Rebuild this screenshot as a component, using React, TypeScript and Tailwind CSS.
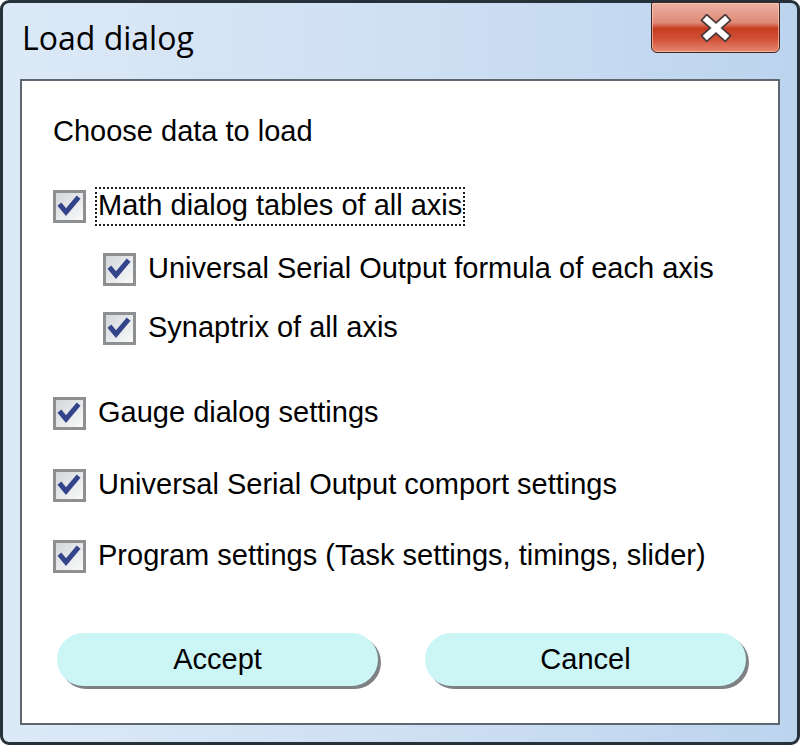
import React from "react";

function Check() {
  return (
    <div className="w-[33px] h-[33px] shrink-0 border-[3px] border-[#8d8f91] bg-gradient-to-br from-[#d3d6da] via-[#e6e8ea] to-[#fafafa] flex items-center justify-center">
      <svg width="27" height="27" viewBox="0 0 27 27">
        <path d="M5 13 L10 19 L21 6" fill="none" stroke="#34448a" strokeWidth="5" strokeLinejoin="miter" strokeLinecap="square" />
      </svg>
    </div>
  );
}

function Row({ label, indent, focus, mt }: { label: string; indent?: boolean; focus?: boolean; mt: string }) {
  return (
    <div className={`flex items-center h-[34px] ${mt} ${indent ? "ml-[50px]" : ""}`}>
      <Check />
      <span
        className={`ml-[9px] px-[1px] h-[39px] flex items-center border-2 border-dotted whitespace-nowrap ${focus ? "border-[#1a1a1a]" : "border-transparent"}`}
      >
        {label}
      </span>
    </div>
  );
}

export default function App() {
  return (
    <div className="w-[800px] h-[745px] overflow-hidden bg-white">
      <div className="w-[800px] h-[745px] border-[3px] border-[#27313a] rounded-[9px] bg-gradient-to-r from-[#dce9f7] via-[#cfe0f3] to-[#bcd4ee] flex flex-col">
        <div className="h-[76px] shrink-0 flex items-start justify-between">
          <div
            className="pl-[19px] pt-[19px] text-[32px] leading-[32px] text-black"
            style={{ fontFamily: '"Open Sans", "Noto Sans", sans-serif' }}
          >
            Load dialog
          </div>
          <div className="mt-[-1px] mr-[17px] w-[129px] h-[51px] rounded-b-[6px] rounded-t-[2px] border border-[#3f2420] bg-[linear-gradient(to_bottom,#ebb2a6_0%,#df8a76_40%,#c73c20_52%,#d04f34_72%,#e6866f_100%)] flex items-center justify-center shadow-[inset_0_0_0_1px_rgba(255,220,210,0.55)]">
            <svg width="34" height="28" viewBox="0 0 34 28">
              <path d="M8 6 L26 22 M26 6 L8 22" stroke="#4a3a3a" strokeWidth="9.5" strokeLinecap="square" fill="none" />
              <path d="M8 6 L26 22 M26 6 L8 22" stroke="#ffffff" strokeWidth="6" strokeLinecap="square" fill="none" />
            </svg>
          </div>
        </div>
        <div
          className="flex-1 mx-[17px] mb-[17px] bg-white border-2 border-[#5e6670] flex flex-col pt-[34px] pl-[31px] text-[29px] text-black"
          style={{ fontFamily: '"Liberation Sans", Arial, sans-serif' }}
        >
          <div className="h-[34px] flex items-center">Choose data to load</div>
          <Row label="Math dialog tables of all axis" focus mt="mt-[40px]" />
          <Row label="Universal Serial Output formula of each axis" indent mt="mt-[29px]" />
          <Row label="Synaptrix of all axis" indent mt="mt-[25px]" />
          <Row label="Gauge dialog settings" mt="mt-[51px]" />
          <Row label="Universal Serial Output comport settings" mt="mt-[38px]" />
          <Row label="Program settings (Task settings, timings, slider)" mt="mt-[37px]" />
          <div className="flex mt-[60px] ml-[4px] gap-[47px]">
            <button className="w-[321px] h-[53px] rounded-full bg-[#ccf5f6] shadow-[3px_3px_0_#7d8184] flex items-center justify-center text-[29px] text-black">
              Accept
            </button>
            <button className="w-[321px] h-[53px] rounded-full bg-[#ccf5f6] shadow-[3px_3px_0_#7d8184] flex items-center justify-center text-[29px] text-black">
              Cancel
            </button>
          </div>
        </div>
      </div>
    </div>
  );
}
